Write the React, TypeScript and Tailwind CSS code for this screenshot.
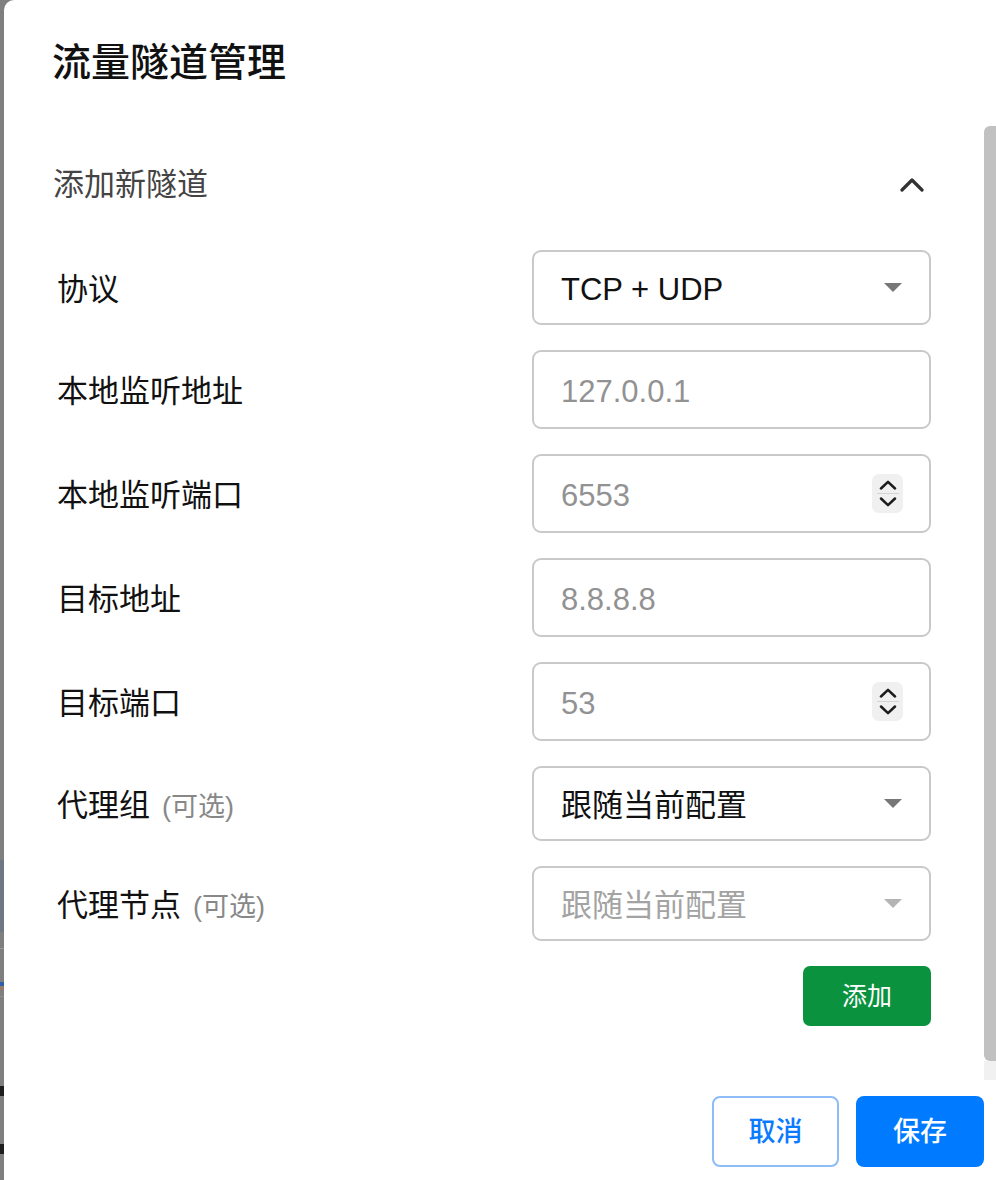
import React from "react";

type Field = {
  label: string;
  optional?: boolean;
  kind: "select" | "text" | "number";
  value: string;
  placeholder?: boolean;
  disabled?: boolean;
};

const fields: Field[] = [
  { label: "协议", kind: "select", value: "TCP + UDP" },
  { label: "本地监听地址", kind: "text", value: "127.0.0.1", placeholder: true },
  { label: "本地监听端口", kind: "number", value: "6553", placeholder: true },
  { label: "目标地址", kind: "text", value: "8.8.8.8", placeholder: true },
  { label: "目标端口", kind: "number", value: "53", placeholder: true },
  { label: "代理组", optional: true, kind: "select", value: "跟随当前配置" },
  {
    label: "代理节点",
    optional: true,
    kind: "select",
    value: "跟随当前配置",
    disabled: true,
  },
];

const Caret = ({ disabled }: { disabled?: boolean }) => (
  <svg width="20" height="11" viewBox="0 0 20 11">
    <path d="M1 1 L19 1 L10 10 Z" fill={disabled ? "#b4b4b4" : "#777777"} />
  </svg>
);

// number stepper, drawn like the native one in the shot
const Spinner = () => (
  <div className="flex h-[39px] w-[31px] flex-col items-center justify-center rounded-[7px] bg-[#f0f0f0]">
    <svg width="18" height="10" viewBox="0 0 18 10">
      <polyline
        points="2,8.5 9,1.8 16,8.5"
        fill="none"
        stroke="#1c1c1c"
        strokeWidth="2.5"
        strokeLinecap="round"
        strokeLinejoin="round"
      />
    </svg>
    <div className="my-[3px] h-[1.5px] w-[22px] bg-[#d4d4d4]" />
    <svg width="18" height="10" viewBox="0 0 18 10">
      <polyline
        points="2,1.5 9,8.2 16,1.5"
        fill="none"
        stroke="#1c1c1c"
        strokeWidth="2.5"
        strokeLinecap="round"
        strokeLinejoin="round"
      />
    </svg>
  </div>
);

const Control = ({ f }: { f: Field }) => {
  if (f.kind === "select") {
    return (
      <div className="flex h-[75px] w-[399px] items-center justify-between rounded-[9px] border-2 border-[#c9c9c9] bg-white pl-[27px] pr-[26px]">
        <span
          className={
            f.disabled
              ? "pt-[5px] text-[31px] text-[#a3a3a3]"
              : "pt-[5px] text-[31px] text-[#111111]"
          }
        >
          {f.value}
        </span>
        <Caret disabled={f.disabled} />
      </div>
    );
  }
  return (
    <div className="flex h-[79px] w-[399px] items-center rounded-[9px] border-2 border-[#c9c9c9] bg-white pl-[27px] pr-[26px]">
      <input
        readOnly
        placeholder={f.value}
        className="min-w-0 flex-1 bg-transparent pt-[5px] text-[31px] text-[#111111] outline-none placeholder:text-[#929292]"
      />
      {f.kind === "number" && <Spinner />}
    </div>
  );
};

const App = () => {
  return (
    <div className="flex h-[1180px] w-[996px] overflow-hidden bg-[#7f7f7f] font-['Liberation_Sans','Noto_Sans_CJK_SC',sans-serif]">
      {/* backdrop sliver */}
      <div className="flex w-[4px] flex-col">
        <div className="h-[860px] bg-[#7f7f7f]" />
        <div className="h-[72px] bg-[#6f7785]" />
        <div className="h-[16px] bg-[#7f7f7f]" />
        <div className="h-[1px] bg-[#9a9a9a]" />
        <div className="h-[33px] bg-[#7f7f7f]" />
        <div className="h-[4px] bg-[#2f5fa8]" />
        <div className="h-[4px] bg-[#9a7a6a]" />
        <div className="h-[6px] bg-[#7f7f7f]" />
        <div className="h-[1px] bg-[#8e8e8e]" />
        <div className="h-[89px] bg-[#7f7f7f]" />
        <div className="h-[10px] bg-[#1e1e1e]" />
        <div className="h-[48px] bg-[#7f7f7f]" />
        <div className="h-[10px] bg-[#1e1e1e]" />
        <div className="flex-1 bg-[#7f7f7f]" />
      </div>

      {/* modal */}
      <div className="flex flex-1 flex-col rounded-tl-[10px] bg-white">
        <div className="flex h-[124px] items-center pl-[48px] pt-[2px]">
          <h2 className="text-[39px] font-medium text-[#111111]">
            流量隧道管理
          </h2>
        </div>

        <div className="flex h-[956px]">
          <div className="flex flex-1 flex-col pl-[49px] pr-[53px] pt-[30px]">
            {/* section header */}
            <div className="flex h-[60px] items-center justify-between">
              <span className="pt-[2px] text-[31px] text-[#444444]">
                添加新隧道
              </span>
              <svg
                width="24"
                height="15"
                viewBox="0 0 24 15"
                className="mr-[7px]"
              >
                <polyline
                  points="2,13 12,3 22,13"
                  fill="none"
                  stroke="#333333"
                  strokeWidth="3.2"
                  strokeLinecap="round"
                  strokeLinejoin="round"
                />
              </svg>
            </div>

            {/* form rows */}
            <div className="mt-[36px] flex flex-col gap-[25px] pl-[4px]">
              {fields.map((f) => (
                <div key={f.label} className="flex items-center">
                  <div className="flex flex-1 items-baseline pt-[5px]">
                    <span className="text-[31px] text-[#111111]">
                      {f.label}
                    </span>
                    {f.optional && (
                      <span className="ml-[12px] text-[27px] text-[#888888]">
                        (可选)
                      </span>
                    )}
                  </div>
                  <Control f={f} />
                </div>
              ))}

              <div className="flex justify-end">
                <button className="h-[60px] w-[128px] rounded-[7px] bg-[#0a923e] pt-[2px] text-[25px] text-white">
                  添加
                </button>
              </div>
            </div>
          </div>

          {/* scrollbar */}
          <div className="mt-[2px] flex w-[12px] flex-col">
            <div className="h-[935px] rounded-l-[6px] bg-[#c1c1c1]" />
            <div className="flex-1 bg-[#f1f1f1]" />
          </div>
        </div>

        {/* footer */}
        <div className="flex flex-1 justify-end gap-[17px] pr-[12px] pt-[16px]">
          <button className="h-[71px] w-[127px] rounded-[8px] border-2 border-[#8dbcf7] bg-white pt-[2px] text-[27px] font-medium text-[#0a7aff]">
            取消
          </button>
          <button className="h-[71px] w-[128px] rounded-[8px] bg-[#007bff] pt-[2px] text-[27px] font-medium text-white">
            保存
          </button>
        </div>
      </div>
    </div>
  );
};

export default App;
